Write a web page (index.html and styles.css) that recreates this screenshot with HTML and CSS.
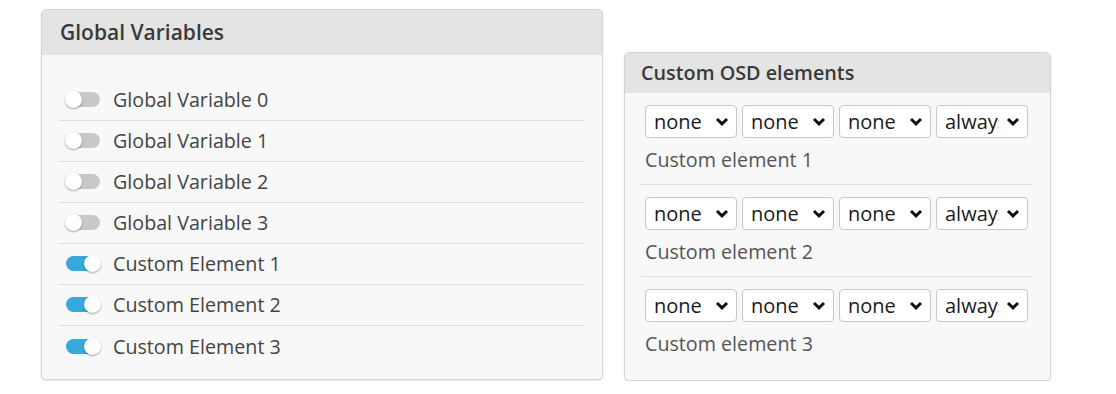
FILE: index.html
```html
<!DOCTYPE html>
<html lang="en">
<head>
<meta charset="UTF-8" />
<title>OSD</title>
<link rel="stylesheet" href="styles.css">
</head>
<body>
<div class="page">

<div class="gui_box global">
	<div class="gui_box_titlebar">Global Variables</div>
	<div class="spacer_box">
		<div class="switch_row"><span class="toggle"></span>Global Variable 0</div>
		<div class="switch_row"><span class="toggle"></span>Global Variable 1</div>
		<div class="switch_row"><span class="toggle"></span>Global Variable 2</div>
		<div class="switch_row"><span class="toggle"></span>Global Variable 3</div>
		<div class="switch_row"><span class="toggle on"></span>Custom Element 1</div>
		<div class="switch_row"><span class="toggle on"></span>Custom Element 2</div>
		<div class="switch_row"><span class="toggle on"></span>Custom Element 3</div>
	</div>
</div>

<div class="gui_box custom">
	<div class="gui_box_titlebar">Custom OSD elements</div>
	<div class="spacer_box">
		<div class="element_block">
			<div class="selects">
				<span class="sel"><select><option>none</option></select><svg viewBox="0 0 14 9"><path d="M2 2 7 6.8 12 2"/></svg></span>
				<span class="sel"><select><option>none</option></select><svg viewBox="0 0 14 9"><path d="M2 2 7 6.8 12 2"/></svg></span>
				<span class="sel"><select><option>none</option></select><svg viewBox="0 0 14 9"><path d="M2 2 7 6.8 12 2"/></svg></span>
				<span class="sel"><select><option>always</option></select><svg viewBox="0 0 14 9"><path d="M2 2 7 6.8 12 2"/></svg></span>
			</div>
			<label>Custom element 1</label>
		</div>
		<div class="element_block">
			<div class="selects">
				<span class="sel"><select><option>none</option></select><svg viewBox="0 0 14 9"><path d="M2 2 7 6.8 12 2"/></svg></span>
				<span class="sel"><select><option>none</option></select><svg viewBox="0 0 14 9"><path d="M2 2 7 6.8 12 2"/></svg></span>
				<span class="sel"><select><option>none</option></select><svg viewBox="0 0 14 9"><path d="M2 2 7 6.8 12 2"/></svg></span>
				<span class="sel"><select><option>always</option></select><svg viewBox="0 0 14 9"><path d="M2 2 7 6.8 12 2"/></svg></span>
			</div>
			<label>Custom element 2</label>
		</div>
		<div class="element_block">
			<div class="selects">
				<span class="sel"><select><option>none</option></select><svg viewBox="0 0 14 9"><path d="M2 2 7 6.8 12 2"/></svg></span>
				<span class="sel"><select><option>none</option></select><svg viewBox="0 0 14 9"><path d="M2 2 7 6.8 12 2"/></svg></span>
				<span class="sel"><select><option>none</option></select><svg viewBox="0 0 14 9"><path d="M2 2 7 6.8 12 2"/></svg></span>
				<span class="sel"><select><option>always</option></select><svg viewBox="0 0 14 9"><path d="M2 2 7 6.8 12 2"/></svg></span>
			</div>
			<label>Custom element 3</label>
		</div>
	</div>
</div>

</div>
</body>
</html>
```

FILE: styles.css
```css
* {
	margin: 0;
	padding: 0;
	box-sizing: border-box;
}

body {
	margin: 0;
	background: #fff;
	font: 19.7px "Open Sans", sans-serif;
	color: #444;
}

.page {
	display: flex;
	align-items: flex-start;
	gap: 21px;
	padding: 9px 0 0 41px;
}

.gui_box {
	background: #f8f8f8;
	border: 1px solid #d4d4d4;
	border-radius: 5px;
	box-shadow: 0 1px 2px rgba(0, 0, 0, .12);
	overflow: hidden;
}

.gui_box_titlebar {
	background: #e4e4e4;
	color: #3a3a3a;
	font-weight: 600;
}

/* left box */
.global {
	width: 562px;
}

.global .gui_box_titlebar {
	height: 45px;
	line-height: 45px;
	padding-left: 18px;
	font-size: 21px;
}

.global .spacer_box {
	padding: 25px 17px 12px;
}

.switch_row {
	display: flex;
	align-items: center;
	height: 41px;
	border-bottom: 1px solid #ddd;
	padding-bottom: 1px;
}

.switch_row:last-child {
	border-bottom: none;
}

.toggle {
	position: relative;
	display: inline-block;
	width: 34px;
	height: 15px;
	margin: 0 13px 0 7px;
	border-radius: 8px;
	background: #c8c8c8;
}

.toggle::after {
	content: "";
	position: absolute;
	left: -1px;
	top: -1px;
	width: 17px;
	height: 17px;
	border-radius: 50%;
	background: #fff;
	box-shadow: 0 1px 2px rgba(0, 0, 0, .35);
}

.toggle.on {
	background: #37a8db;
}

.toggle.on::after {
	left: auto;
	right: -1px;
}

/* right box */
.custom {
	width: 427px;
	margin-top: 43px;
}

.custom .gui_box_titlebar {
	height: 40px;
	line-height: 40px;
	padding-left: 16px;
	font-size: 19.8px;
}

.custom .spacer_box {
	padding: 12px 17px 12px 16px;
}

.element_block {
	padding: 0 0 11px 4px;
	border-bottom: 1px solid #ddd;
	margin-bottom: 12px;
}

.element_block:last-child {
	border-bottom: none;
	margin-bottom: 0;
}

.selects {
	display: flex;
	gap: 5px;
}

.sel {
	position: relative;
	display: block;
}

.sel select {
	-webkit-appearance: none;
	appearance: none;
	width: 92px;
	height: 33px;
	padding: 0 28px 0 8px;
	border: 1px solid #c8c8c8;
	border-radius: 4px;
	background: #fff;
	font: 20px "Open Sans", sans-serif;
	color: #1a1a1a;
	outline: none;
}

.sel svg {
	position: absolute;
	right: 8px;
	top: 12px;
	width: 14px;
	height: 9px;
	fill: none;
	stroke: #111;
	stroke-width: 3;
	pointer-events: none;
}

.element_block label {
	display: block;
	margin-top: 9px;
	line-height: 26px;
	color: #555;
}
```
